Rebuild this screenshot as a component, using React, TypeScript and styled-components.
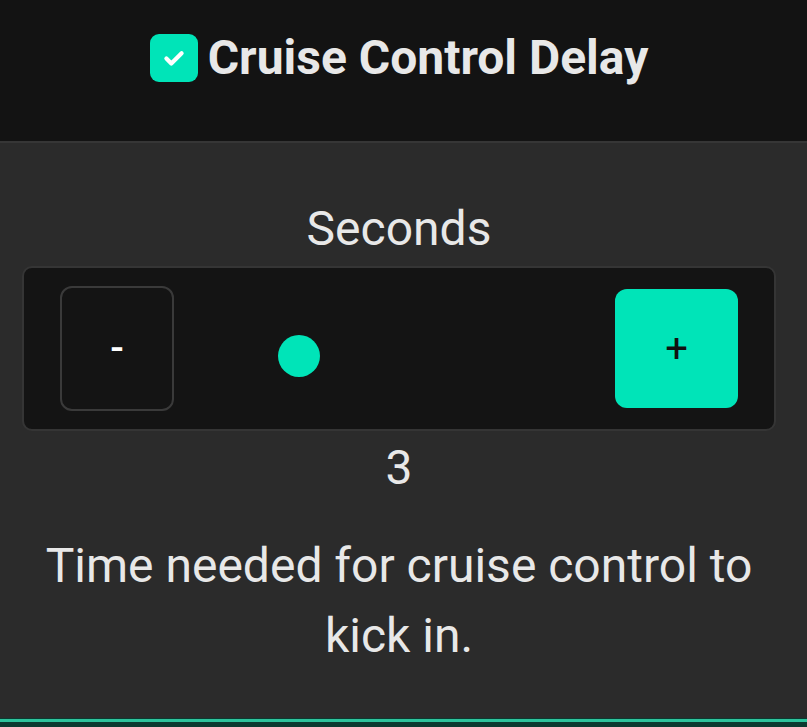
import React, { useState } from "react";
import styled, { createGlobalStyle } from "styled-components";

const GlobalStyle = createGlobalStyle`
  html, body {
    margin: 0;
    padding: 0;
    background: #2b2b2b;
  }
  body {
    font-family: Roboto, "Liberation Sans", sans-serif;
    color: #e8e8e8;
  }
`;

const Page = styled.div`
  width: 807px;
  height: 727px;
  display: flex;
  flex-direction: column;
  background: #2b2b2b;
  overflow: hidden;
`;

const Header = styled.header`
  height: 143px;
  flex-shrink: 0;
  background: #131313;
  border-bottom: 2px solid #363636;
  display: flex;
  justify-content: center;
  align-items: flex-start;
  padding: 34px 9px 0 0;
  box-sizing: border-box;
  gap: 10px;
`;

const Check = styled.span`
  width: 48px;
  height: 48px;
  border-radius: 9px;
  background: #00e4b8;
  display: flex;
  align-items: center;
  justify-content: center;
`;

const Title = styled.h1`
  margin: 0;
  font-size: 48px;
  font-weight: 700;
  line-height: 48px;
  color: #e8e8e8;
`;

const Body = styled.main`
  flex: 1;
  display: flex;
  flex-direction: column;
  align-items: center;
  padding: 0 31px 0 22px;
  box-sizing: border-box;
`;

const Label = styled.div<{ $top?: number }>`
  font-size: 48px;
  line-height: 70px;
  margin-top: ${(p) => p.$top ?? 0}px;
  text-align: center;
  color: #e8e8e8;
`;

const SliderBox = styled.div`
  align-self: stretch;
  height: 165px;
  margin-top: 2px;
  box-sizing: border-box;
  background: #141414;
  border: 2px solid #353535;
  border-radius: 10px;
  display: flex;
  align-items: center;
  padding: 0 36px;
`;

const StepButton = styled.button<{ $primary?: boolean }>`
  width: ${(p) => (p.$primary ? 123 : 114)}px;
  height: ${(p) => (p.$primary ? 119 : 125)}px;
  flex-shrink: 0;
  border-radius: 12px;
  box-sizing: border-box;
  border: ${(p) => (p.$primary ? "none" : "2px solid #3a3a3a")};
  background: ${(p) => (p.$primary ? "#00e4b8" : "#141414")};
  color: ${(p) => (p.$primary ? "#111" : "#ffffff")};
  font-family: Roboto, "Liberation Sans", sans-serif;
  font-size: 40px;
  font-weight: ${(p) => (p.$primary ? 400 : 500)};
  display: flex;
  align-items: center;
  justify-content: center;
  padding: 0;
  cursor: pointer;
`;

const Track = styled.div`
  flex: 1;
  height: 42px;
  margin: 0 22px 0 26px;
  position: relative;
  top: 7px;
`;

const Thumb = styled.div`
  position: absolute;
  top: 0;
  width: 42px;
  height: 42px;
  border-radius: 50%;
  background: #00e4b8;
`;

const Description = styled.p`
  margin: 28px 0 0;
  font-size: 48px;
  line-height: 70px;
  text-align: center;
  color: #e8e8e8;
`;

const Footer = styled.div`
  height: 8px;
  flex-shrink: 0;
  background: #0b3a30;
  border-top: 1px solid #0b3a30;
  &::before {
    content: "";
    display: block;
    height: 3px;
    width: 100%;
    background: #2dc39c;
  }
`;

export default function App() {
  const [value, setValue] = useState(3);
  const min = 1;
  const max = 10;
  const pct = (value - min) / (max - min);
  return (
    <Page>
      <GlobalStyle />
      <Header>
        <Check>
          <svg width="28" height="28" viewBox="0 0 24 24" fill="none">
            <path
              d="M5.5 12.5l4.2 4.2L18.5 8"
              stroke="#fff"
              strokeWidth="3.6"
              strokeLinecap="round"
              strokeLinejoin="round"
            />
          </svg>
        </Check>
        <Title>Cruise Control Delay</Title>
      </Header>
      <Body>
        <Label $top={51}>Seconds</Label>
        <SliderBox>
          <StepButton onClick={() => setValue((v) => Math.max(min, v - 1))}>-</StepButton>
          <Track>
            <Thumb style={{ left: `calc(${pct} * (100% - 42px))` }} />
          </Track>
          <StepButton $primary onClick={() => setValue((v) => Math.min(max, v + 1))}>
            +
          </StepButton>
        </SliderBox>
        <Label $top={2}>{value}</Label>
        <Description>
          Time needed for cruise control to
          <br />
          kick in.
        </Description>
      </Body>
      <Footer />
    </Page>
  );
}
